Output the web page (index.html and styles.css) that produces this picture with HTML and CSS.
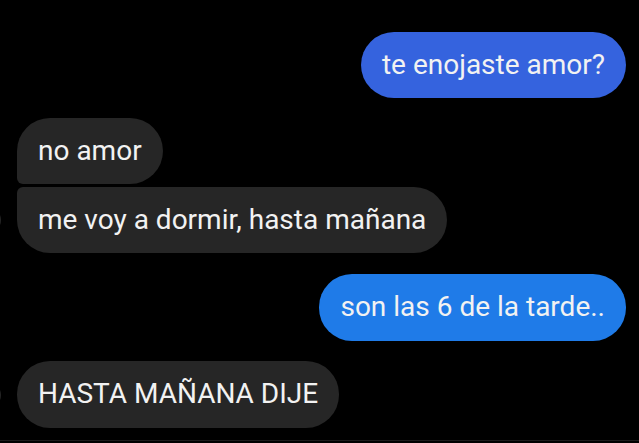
FILE: index.html
```html
<!DOCTYPE html>
<html lang="es">
<head>
<meta charset="utf-8">
<link rel="stylesheet" href="styles.css">
</head>
<body>
<div class="chat">
  <div class="row out first">
    <div class="bubble blue1">te enojaste amor?</div>
  </div>
  <div class="row in group">
    <div class="avatar hidden"></div>
    <div class="bubble grey top">no amor</div>
  </div>
  <div class="row in tight">
    <div class="avatar"></div>
    <div class="bubble grey bottom">me voy a dormir, hasta mañana</div>
  </div>
  <div class="row out wide">
    <div class="bubble blue2 tall">son las 6 de la tarde..</div>
  </div>
  <div class="row in">
    <div class="avatar"></div>
    <div class="bubble grey tall">HASTA MAÑANA DIJE</div>
  </div>
</div>
<div class="footer-line"></div>
</body>
</html>
```

FILE: styles.css
```css
html, body {
  margin: 0;
  padding: 0;
  background: #000;
  width: 639px;
  height: 443px;
  overflow: hidden;
}
body {
  font-family: Roboto, "Noto Sans", sans-serif;
  position: relative;
}
.chat {
  display: flex;
  flex-direction: column;
  padding: 32px 13px 0 0;
  height: 408px;
}
.row {
  display: flex;
  align-items: center;
  margin-top: 20px;
}
.row.first { margin-top: 0; }
.row.tight { margin-top: 3px; }
.row.wide { margin-top: 21px; }
.row.out { justify-content: flex-end; }
.avatar {
  width: 26px;
  height: 26px;
  border-radius: 50%;
  background: #262626;
  margin-left: -25px;
  margin-right: 16px;
  flex-shrink: 0;
}
.avatar.hidden { visibility: hidden; }
.bubble {
  font-size: 28px;
  line-height: 32px;
  padding: 17px 21px;
  border-radius: 33px;
  color: #f2f2f2;
  white-space: nowrap;
}
.bubble.tall { padding-bottom: 18px; }
.blue1 { background: #3563de; }
.blue2 { background: #1f7be8; }
.grey { background: #262626; }
.grey.top { border-bottom-left-radius: 6px; }
.grey.bottom { border-top-left-radius: 6px; }
.footer-line {
  position: absolute;
  left: 0;
  right: 0;
  bottom: 2px;
  height: 1px;
  background: #1c1c1c;
}
```
